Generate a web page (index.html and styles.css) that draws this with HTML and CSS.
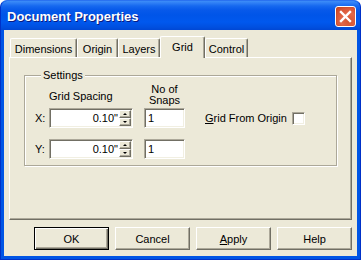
FILE: index.html
```html
<!DOCTYPE html>
<html>
<head>
<meta charset="utf-8">
<link rel="stylesheet" href="styles.css">
</head>
<body>
<div class="window">
  <div class="titlebar">
    <span class="title">Document Properties</span>
    <span class="close">
      <svg viewBox="0 0 19 19" width="19" height="19"><path d="M5 5 L14 14 M14 5 L5 14" stroke="#fff" stroke-width="2.4" stroke-linecap="square" fill="none"/></svg>
    </span>
  </div>
  <div class="client">
    <div class="tabs">
      <div class="tab t-dim">Dimensions</div>
      <div class="tab t-org">Origin</div>
      <div class="tab t-lay">Layers</div>
      <div class="tab t-grid active">Grid</div>
      <div class="tab t-ctl">Control</div>
    </div>
    <div class="panel">
      <fieldset class="group">
        <legend>Settings</legend>
        <div class="head">
          <span class="lbl"></span>
          <span class="h-spacing">Grid Spacing</span>
          <span class="h-snaps">No of<br>Snaps</span>
        </div>
        <div class="row">
          <span class="lbl">X:</span>
          <span class="edit wide"><span class="val">0.10"</span><span class="spin"><span class="sb up"></span><span class="sb down"></span></span></span>
          <span class="edit snaps"><span class="val left">1</span></span>
          <span class="origin"><span><u>G</u>rid From Origin</span><span class="check"></span></span>
        </div>
        <div class="row row2">
          <span class="lbl">Y:</span>
          <span class="edit wide"><span class="val">0.10"</span><span class="spin"><span class="sb up"></span><span class="sb down"></span></span></span>
          <span class="edit snaps"><span class="val left">1</span></span>
        </div>
      </fieldset>
    </div>
    <div class="buttons">
      <span class="btn default">OK</span>
      <span class="btn">Cancel</span>
      <span class="btn"><u>A</u>pply</span>
      <span class="btn">Help</span>
    </div>
  </div>
</div>
</body>
</html>
```
FILE: styles.css
```css
html, body {
  margin: 0;
  padding: 0;
  background: #ffffff;
}
body {
  font-family: "Liberation Sans", Arial, sans-serif;
  font-size: 11px;
  color: #000;
}
.window {
  width: 361px;
  height: 260px;
  box-sizing: border-box;
  display: flex;
  flex-direction: column;
  background: #0055e5;
  border-radius: 7px 7px 0 0;
  border: 1px solid #0031c8;
  border-top-color: #2a72f0;
  padding: 0 3px 3px 3px;
  overflow: hidden;
}
.titlebar {
  height: 29px;
  flex: none;
  margin: 0 -3px;
  display: flex;
  align-items: center;
  justify-content: space-between;
  padding: 0 4px 0 6px;
  background: linear-gradient(to bottom, #3d8df8 0px, #2f7ff5 2px, #1668ef 5px, #0759ea 9px, #0055e8 14px, #0058ee 21px, #0050e0 26px, #0047d4 29px);
  border-radius: 6px 6px 0 0;
}
.title {
  color: #fff;
  font-weight: bold;
  font-size: 13px;
  text-shadow: 1px 1px #0a1a80;
  margin-top: 1px;
}
.close {
  width: 19px;
  height: 19px;
  border: 1px solid #fff;
  border-radius: 3px;
  margin-top: 2px;
  display: flex;
  background: radial-gradient(circle at 70% 75%, #d3532e 0, #e2684a 40%, #dc5b3a 60%, #c5401c 100%);
  box-shadow: inset 0 0 1px #a02c0c;
}
.close svg {
  display: block;
}
.client {
  flex: 1;
  background: #ece9d8;
  display: flex;
  flex-direction: column;
  padding-top: 6px;
}
.tabs {
  display: flex;
  align-items: flex-end;
  height: 21px;
  padding-left: 6px;
  position: relative;
  z-index: 1;
}
.tab {
  box-sizing: border-box;
  height: 19px;
  display: flex;
  align-items: center;
  justify-content: center;
  background: #ece9d8;
  border-top: 1px solid #fff;
  border-left: 1px solid #fff;
  border-right: 1px solid #716f64;
  box-shadow: inset -1px 0 #aca899;
  border-radius: 2px 2px 0 0;
  padding-top: 1px;
}
.t-dim { width: 67px; }
.t-org { width: 41px; }
.t-lay { width: 42px; }
.t-grid { width: 45px; }
.t-ctl { width: 43px; }
.tab.active {
  height: 22px;
  margin-bottom: -1px;
  padding-bottom: 3px;
}
.panel {
  box-sizing: border-box;
  height: 163px;
  margin: 0 5px;
  border-top: 1px solid #fff;
  border-left: 1px solid #fff;
  border-right: 1px solid #716f64;
  border-bottom: 1px solid #716f64;
  box-shadow: inset -1px -1px #aca899;
  padding: 10px 14px 0 14px;
}
.group {
  margin: 0;
  padding: 0 0 6px 10px;
  border: 1px solid #aca899;
  box-shadow: inset 1px 1px #fff, 1px 1px #fff;
  min-width: 0;
}
.group legend {
  padding: 0 2px;
  margin-left: 6px;
  line-height: 14px;
  background: #ece9d8;
}
.head {
  display: flex;
  align-items: center;
  height: 24px;
  margin: 1px 0 1px 0;
}
.lbl {
  width: 14px;
  flex: none;
}
.h-spacing {
  width: 84px;
  flex: none;
  padding-top: 1px;
}
.h-snaps {
  width: 41px;
  margin-left: 11px;
  text-align: center;
  line-height: 11px;
}
.row {
  display: flex;
  align-items: center;
  height: 20px;
}
.row2 {
  margin-top: 11px;
}
.edit {
  box-sizing: border-box;
  height: 20px;
  display: flex;
  align-items: stretch;
  background: #fff;
  border: 1px solid;
  border-color: #aca899 #fff #fff #aca899;
  box-shadow: inset 1px 1px #716f64, inset -1px -1px #f1efe2;
  padding: 1px;
}
.wide {
  width: 84px;
}
.snaps {
  width: 41px;
  margin-left: 11px;
}
.val {
  flex: 1;
  text-align: right;
  line-height: 16px;
  padding-right: 1px;
}
.val.left {
  text-align: left;
  padding-left: 2px;
}
.spin {
  width: 12px;
  display: flex;
  flex-direction: column;
}
.sb {
  flex: 1;
  background: #ece9d8;
  border: 1px solid;
  border-color: #fff #716f64 #716f64 #fff;
  box-shadow: inset -1px -1px #aca899;
  position: relative;
}
.sb::after {
  content: "";
  position: absolute;
  left: 3px;
  top: 2px;
  border-left: 2px solid transparent;
  border-right: 2px solid transparent;
}
.sb.up::after {
  border-bottom: 2px solid #000;
}
.sb.down::after {
  border-top: 2px solid #000;
}
.origin {
  margin-left: 20px;
  display: flex;
  align-items: center;
  gap: 5px;
}
.check {
  width: 13px;
  height: 13px;
  box-sizing: border-box;
  background: #fff;
  border: 1px solid;
  border-color: #aca899 #fff #fff #aca899;
  box-shadow: inset 1px 1px #716f64, inset -1px -1px #f1efe2;
}
.buttons {
  display: flex;
  gap: 6px;
  margin-top: 7px;
  padding-left: 30px;
}
.btn {
  box-sizing: border-box;
  width: 75px;
  height: 23px;
  display: flex;
  align-items: center;
  justify-content: center;
  background: #ece9d8;
  border: 1px solid;
  border-color: #fff #716f64 #716f64 #fff;
  box-shadow: inset -1px -1px #aca899;
}
.btn.default {
  border: 1px solid #000;
  box-shadow: inset 1px 1px #fff, inset -1px -1px #716f64, inset -2px -2px #aca899;
}
u {
  text-decoration: underline;
  text-underline-offset: 1px;
}
```
